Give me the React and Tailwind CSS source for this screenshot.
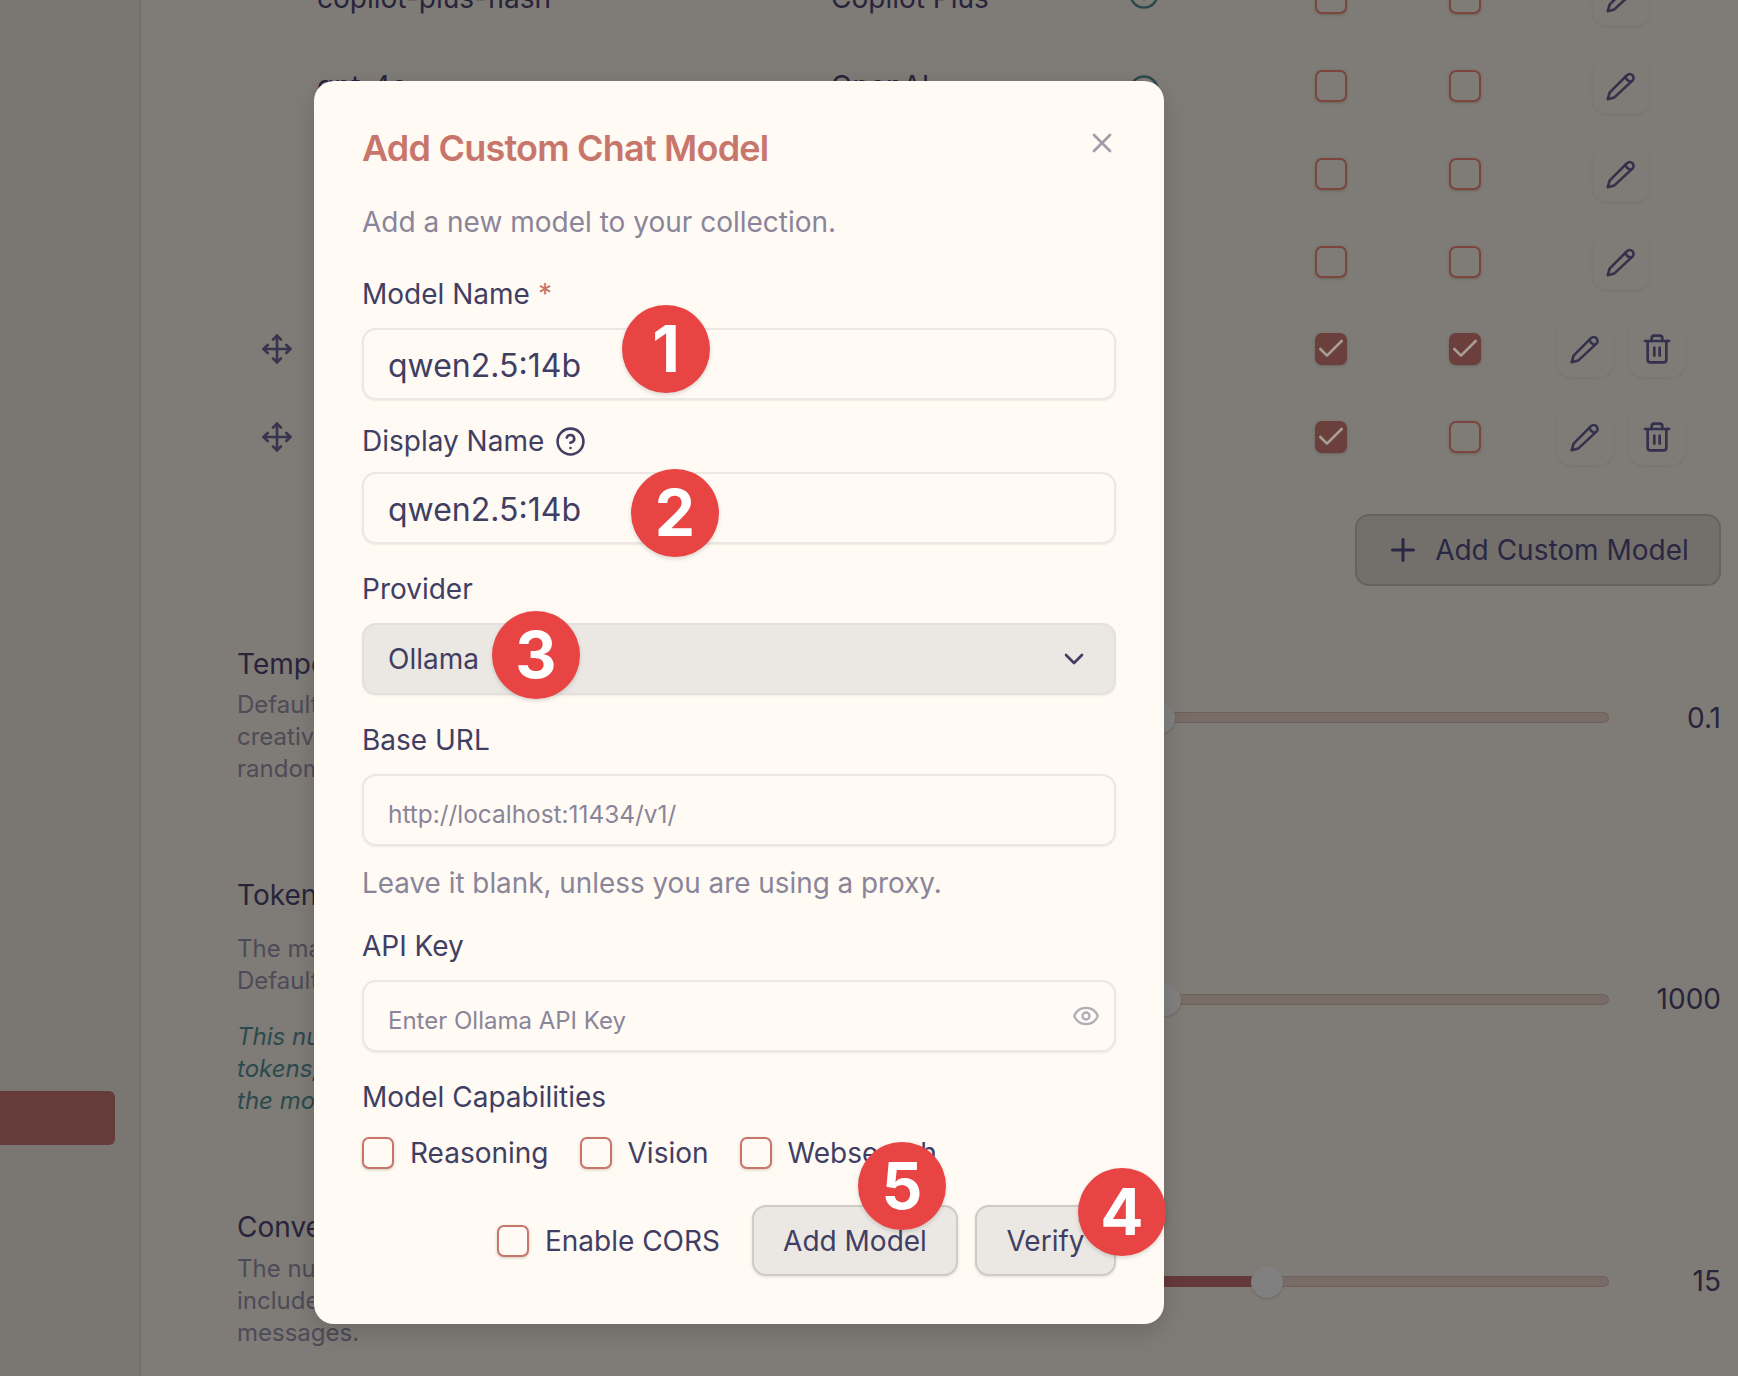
import React from "react";
import { Move, Trash2, Plus, Check, X, ChevronDown, CircleHelp, Eye } from "lucide-react";

function TableBox({ checked }) {
  return (
    <div className={`flex h-[32px] w-[32px] items-center justify-center rounded-[7px] border-2 shadow-[0_1px_3px_rgba(60,50,40,0.3)] ${checked ? "border-[#6b3f3b] bg-[#6b3f3b]" : "border-[#7b443c]"}`}>
      {checked && <Check size={32} strokeWidth={2} className="shrink-0 text-[#a89c94]" />}
    </div>
  );
}

function PencilIcon() {
  return (
    <svg width="30" height="30" viewBox="0 0 30 30" fill="none" stroke="currentColor" strokeWidth="2.6" strokeLinecap="round" strokeLinejoin="round">
      <path d="M1.8 28.2l1.8-6.6L21 4.2a3.8 3.8 0 0 1 5.4 0a3.8 3.8 0 0 1 0 5.4L8.4 26.4Z" />
      <path d="M19.6 5.6c.4 2.6 2.2 4.4 5.2 5.2" />
    </svg>
  );
}

function IconBtn({ children }) {
  return (
    <div className="flex h-[56px] w-[56px] items-center justify-center rounded-[14px] bg-[#7f7b76] text-[#34314c] shadow-[0_1px_3px_rgba(60,55,50,0.12)]">
      {children}
    </div>
  );
}

function Row({ model, provider, ocheck, fcheck, custom, iconClass = "mt-[8px]", className = "" }) {
  return (
    <div className={`flex h-[88px] items-center ${className}`}>
      <div className="flex w-[80px] justify-center">
        {custom && <Move size={32} strokeWidth={2} className="text-[#37344e]" />}
      </div>
      <div className="w-[514px] text-[28px] text-[#27243c]">{model}</div>
      <div className="w-[297px] text-[28px] text-[#27243c]">{provider}</div>
      <div className="flex w-[187px] justify-start">
        <svg width="32" height="32" viewBox="0 0 32 32" fill="none" className={`text-[#2b4a50] ${iconClass}`} stroke="currentColor" strokeWidth="2.5">
          <circle cx="16" cy="16" r="13.5" />
          <circle cx="16" cy="16" r="5" />
        </svg>
      </div>
      <div className="flex w-[134px] justify-start"><TableBox checked={ocheck} /></div>
      <div className="flex w-[108px] justify-start"><TableBox checked={fcheck} /></div>
      {custom ? (
        <div className="flex gap-[16px]">
          <IconBtn><PencilIcon /></IconBtn>
          <IconBtn><Trash2 size={32} strokeWidth={2} /></IconBtn>
        </div>
      ) : (
        <div className="ml-[36px]">
          <IconBtn><PencilIcon /></IconBtn>
        </div>
      )}
    </div>
  );
}

function Slider({ value, thumb }) {
  return (
    <div className="flex items-center">
      <div className="relative h-[11px] w-[459px] rounded-full border border-[#6f5f5a] bg-[#776c66]">
        <div className={`absolute top-[-1px] left-0 h-[11px] rounded-l-full bg-[#65393a] ${thumb.fill}`} />
        <div className={`absolute top-[-11px] h-[32px] w-[32px] rounded-full bg-[#808080] shadow-[0_1px_2px_rgba(50,45,40,0.25)] ${thumb.left}`} />
      </div>
      <div className="w-[112px] text-right text-[28px] leading-[32px] text-[#27243c]">{value}</div>
    </div>
  );
}

function Section({ title, children, slider }) {
  return (
    <div className="flex items-center justify-between">
      <div className="w-[400px]">
        <div className="text-[28px] leading-[28px] text-[#27243c]">{title}</div>
        {children}
      </div>
      {slider}
    </div>
  );
}

function Label({ children, className = "" }) {
  return <div className={`flex h-[36px] items-center text-[28px] text-[#413e63] ${className}`}>{children}</div>;
}

function Field({ children, right, className = "border-[#ebe7e2] bg-[#fffaf3]" }) {
  return (
    <div className={`flex h-[72px] items-center justify-between rounded-[14px] border-2 pl-[24px] pr-[16px] shadow-[0_1px_2px_rgba(60,50,40,0.08)] ${className}`}>
      <div>{children}</div>
      {right}
    </div>
  );
}

function Box({ label }) {
  return (
    <div className="flex items-center gap-[16px]">
      <div className="h-[32px] w-[32px] rounded-[7px] border-2 border-[#c8766c] bg-[#fffaf3] shadow-[0_1px_3px_rgba(60,50,40,0.25)]" />
      <span className="text-[28px] text-[#413e63]">{label}</span>
    </div>
  );
}

function Badge({ n, pos }) {
  return (
    <div className={`absolute flex h-[88px] w-[88px] items-center justify-center rounded-full bg-[#e84444] text-[64px] font-bold text-white shadow-[0_2px_4px_rgba(0,0,0,0.15)] ${pos}`}>
      {n}
    </div>
  );
}

export default function App() {
  return (
    <div className="relative flex h-[1376px] w-[1738px] overflow-hidden bg-[#7f7b76] font-['Inter',sans-serif]">
      <aside className="flex h-full w-[141px] shrink-0 flex-col border-r-2 border-[#726f6a] bg-[#7a7772] pt-[1091px]">
        <div className="h-[54px] w-[115px] rounded-r-[6px] bg-[#653c3a]" />
      </aside>

      <main className="mt-[-46px] flex-1">
        <div className="ml-[96px]">
          <Row model="copilot-plus-flash" provider="Copilot Plus" iconClass="mt-[-8px]" />
          <Row model="gpt-4o" provider="OpenAI" />
          <Row model="gpt-4o-mini" provider="OpenAI" />
          <Row model="gpt-4.1" provider="OpenAI" />
          <Row className="mt-[-1px]" model="gemini-2.5-flash" provider="Google" ocheck fcheck custom />
          <Row model="qwen3:14b" provider="Ollama" ocheck custom />
        </div>

        <div className="mt-[33px] flex justify-end pr-[17px]">
          <div className="flex h-[72px] w-[366px] items-center justify-center gap-[14px] rounded-[14px] border-2 border-[#66635f] bg-[#73706b] pr-[2px] text-[28px] text-[#2a2745]">
            <Plus size={36} strokeWidth={2} />
            <span>Add Custom Model</span>
          </div>
        </div>

        <div className="mt-[64px] flex flex-col gap-[96px] pl-[96px] pr-[17px]">
          <Section
            title="Temperature"
            slider={<Slider value="0.1" thumb={{ left: "left-[-8px]", fill: "w-[1px]" }} />}
          >
            <div className="mt-[11px] text-[24px] leading-[32px] text-[#4d4b58]">
              <div>Default is 0.1</div>
              <div>creativity</div>
              <div>randomness</div>
            </div>
          </Section>
          <Section
            title="Token limit"
            slider={<Slider value="1000" thumb={{ left: "left-[-2px]", fill: "w-[1px]" }} />}
          >
            <div className="mt-[24px] text-[24px] leading-[32px] text-[#4d4b58]">
              <div>The maximum</div>
              <div>Default is 1000</div>
            </div>
            <div className="mt-[24px] text-[24px] italic leading-[32px] text-[#2b4a4d]">
              <div>This number</div>
              <div>tokens,</div>
              <div>the model</div>
            </div>
          </Section>
          <Section
            title="Conversation turns"
            slider={<Slider value="15" thumb={{ left: "left-[100px]", fill: "w-[117px]" }} />}
          >
            <div className="mt-[12px] text-[24px] leading-[32px] text-[#4d4b58]">
              <div>The number</div>
              <div>included</div>
              <div>messages.</div>
            </div>
          </Section>
        </div>
      </main>

      <div className="absolute left-[314px] top-[81px] h-[1243px] w-[850px] rounded-[20px] bg-[#fffaf3] px-[48px] shadow-[0_8px_24px_rgba(0,0,0,0.15)]">
        <div className="flex h-[130px] items-start justify-between pt-[44px]">
          <h2 className="text-[36px] font-semibold leading-[46px] tracking-[-0.022em] text-[#c8766c]">Add Custom Chat Model</h2>
          <X size={32} strokeWidth={2} className="mt-[2px] mr-[-2px] text-[#a09ca8]" />
        </div>
        <p className="mt-[-7px] h-[36px] text-[28px] leading-[36px] text-[#8a8599]">Add a new model to your collection.</p>

        <Label className="mt-[36px] gap-[8px]">Model Name <span className="text-[#c8766c]">*</span></Label>
        <div className="mt-[16px]">
          <Field><span className="relative top-[2px] text-[32px] text-[#413e63]">qwen2.5:14b</span></Field>
        </div>

        <Label className="mt-[23px] gap-[11px]">Display Name <CircleHelp size={31} strokeWidth={2} /></Label>
        <div className="mt-[13px]">
          <Field><span className="relative top-[2px] text-[32px] text-[#413e63]">qwen2.5:14b</span></Field>
        </div>

        <Label className="mt-[27px]">Provider</Label>
        <div className="mt-[16px]">
          <Field className="border-[#e4e0db] bg-[#ebe7e2]" right={<ChevronDown size={32} strokeWidth={2} className="mr-[8px] text-[#413e63]" />}>
            <span className="text-[28px] text-[#413e63]">Ollama</span>
          </Field>
        </div>

        <Label className="mt-[27px]">Base URL</Label>
        <div className="mt-[16px]">
          <Field><span className="relative top-[4px] text-[24.4px] text-[#8a8599]">http://localhost:11434/v1/</span></Field>
        </div>

        <p className="mt-[19px] h-[36px] text-[27.85px] leading-[36px] text-[#8a8599]">Leave it blank, unless you are using a proxy.</p>

        <Label className="mt-[27px]">API Key</Label>
        <div className="mt-[16px]">
          <Field right={<Eye size={28} strokeWidth={2} className="mr-[-2px] text-[#b0acb8]" />}>
            <span className="relative top-[5px] text-[24px] text-[#8a8599]">Enter Ollama API Key</span>
          </Field>
        </div>

        <Label className="mt-[27px]">Model Capabilities</Label>
        <div className="mt-[20px] flex h-[36px] items-center gap-[31px]">
          <Box label="Reasoning" />
          <Box label="Vision" />
          <Box label="Websearch" />
        </div>

        <div className="mt-[34px] flex items-center justify-end gap-[17px]">
          <div className="mr-[15px]"><Box label="Enable CORS" /></div>
          <div className="flex h-[71px] w-[206px] items-center justify-center rounded-[14px] border-2 border-[#cfcbc6] bg-[#ebe7e2] text-[28px] text-[#413e63] shadow-[0_1px_3px_rgba(60,50,40,0.15)]">Add Model</div>
          <div className="flex h-[71px] w-[141px] items-center justify-center rounded-[14px] border-2 border-[#cfcbc6] bg-[#ebe7e2] text-[28px] text-[#413e63] shadow-[0_1px_3px_rgba(60,50,40,0.15)]">Verify</div>
        </div>
      </div>

      <Badge n="1" pos="left-[622px] top-[305px]" />
      <Badge n="2" pos="left-[631px] top-[469px]" />
      <Badge n="3" pos="left-[492px] top-[611px]" />
      <Badge n="5" pos="left-[858px] top-[1142px]" />
      <Badge n="4" pos="left-[1078px] top-[1168px]" />
    </div>
  );
}
